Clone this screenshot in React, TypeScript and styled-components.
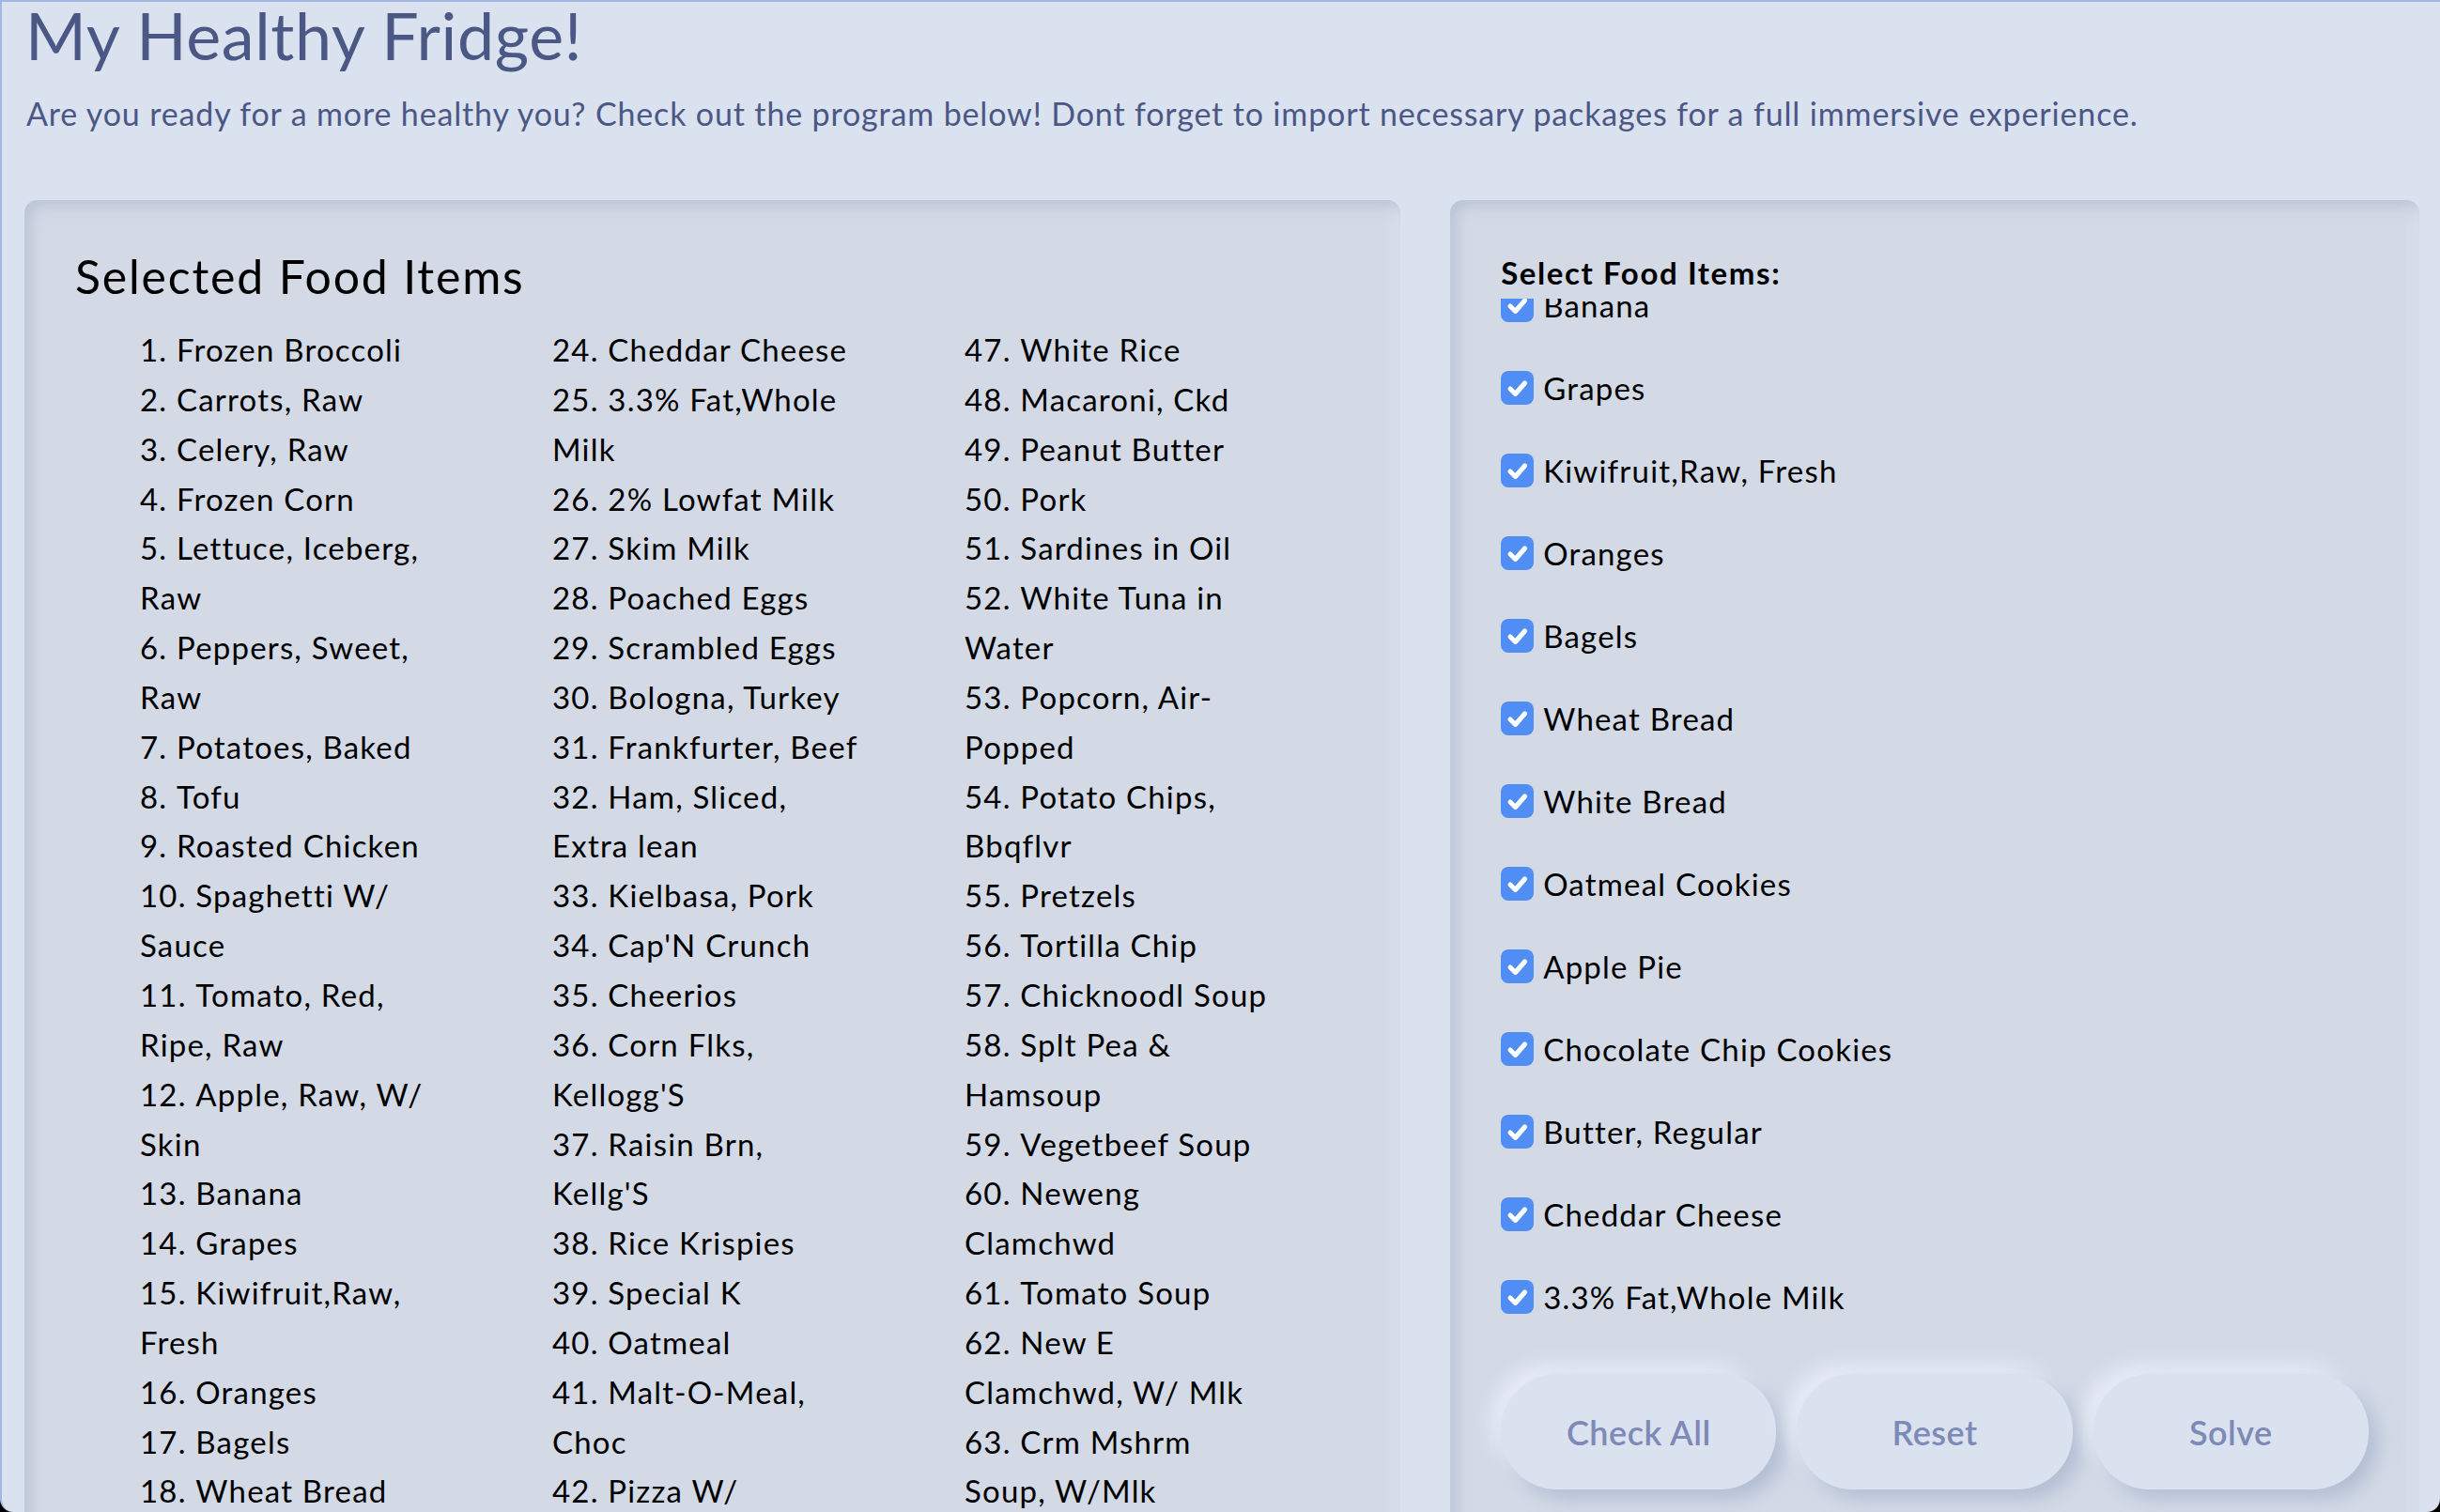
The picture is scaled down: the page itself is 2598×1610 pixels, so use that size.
import { useLayoutEffect, useRef } from 'react';
import styled, { createGlobalStyle } from 'styled-components';

const foods = [
  'Frozen Broccoli',
  'Carrots, Raw',
  'Celery, Raw',
  'Frozen Corn',
  'Lettuce, Iceberg, Raw',
  'Peppers, Sweet, Raw',
  'Potatoes, Baked',
  'Tofu',
  'Roasted Chicken',
  'Spaghetti W/ Sauce',
  'Tomato, Red, Ripe, Raw',
  'Apple, Raw, W/ Skin',
  'Banana',
  'Grapes',
  'Kiwifruit,Raw, Fresh',
  'Oranges',
  'Bagels',
  'Wheat Bread',
  'White Bread',
  'Oatmeal Cookies',
  'Apple Pie',
  'Chocolate Chip Cookies',
  'Butter, Regular',
  'Cheddar Cheese',
  '3.3% Fat,Whole Milk',
  '2% Lowfat Milk',
  'Skim Milk',
  'Poached Eggs',
  'Scrambled Eggs',
  'Bologna, Turkey',
  'Frankfurter, Beef',
  'Ham, Sliced, Extra lean',
  'Kielbasa, Pork',
  "Cap'N Crunch",
  'Cheerios',
  "Corn Flks, Kellogg'S",
  "Raisin Brn, Kellg'S",
  'Rice Krispies',
  'Special K',
  'Oatmeal',
  'Malt-O-Meal, Choc',
  'Pizza W/ Pepperoni',
  'Taco',
  'Hamburger W/ Toppings',
  'Hotdog, Plain',
  'Couscous',
  'White Rice',
  'Macaroni, Ckd',
  'Peanut Butter',
  'Pork',
  'Sardines in Oil',
  'White Tuna in Water',
  'Popcorn, Air-Popped',
  'Potato Chips, Bbqflvr',
  'Pretzels',
  'Tortilla Chip',
  'Chicknoodl Soup',
  'Splt Pea & Hamsoup',
  'Vegetbeef Soup',
  'Neweng Clamchwd',
  'Tomato Soup',
  'New E Clamchwd, W/ Mlk',
  'Crm Mshrm Soup, W/Mlk',
  'Beanbacn Soup, W/Watr',
];

// the selected list is shown in three columns: 1-23, 24-46, 47-64
const columnStarts = [0, 23, 46, foods.length];

const ROW_HEIGHT = 88;
const SCROLL_OFFSET = 1093;

const GlobalStyle = createGlobalStyle`
  html {
    background: #000;
  }
  body {
    margin: 0;
    font-family: Lato, 'Noto Sans', sans-serif;
  }
`;

const StyledPage = styled.div`
  box-sizing: border-box;
  height: 100vh;
  overflow: hidden;
  background: #dbe2ef;
  border-top: 2px solid #a3b7e5;
  border-left: 2px solid #a3b7e5;
  border-radius: 0 0 14px 14px;
  padding: 0 22px 0 24px;
`;

const StyledTitle = styled.h1`
  margin: 0;
  font-size: 70px;
  line-height: 70px;
  font-weight: 400;
  letter-spacing: 0.6px;
  color: #4b5785;
  padding-left: 1px;
`;

const StyledIntro = styled.p`
  margin: 23px 0 0;
  font-size: 34px;
  line-height: 51px;
  letter-spacing: 0.85px;
  color: #4b5785;
  padding-left: 2px;
`;

const StyledPanels = styled.div`
  display: grid;
  grid-template-columns: minmax(0, 1.42fr) minmax(0, 1fr);
  gap: 53px;
  margin-top: 67px;
`;

const StyledPanel = styled.section`
  box-sizing: border-box;
  min-height: 1500px;
  background: #d3dae6;
  border-radius: 14px;
  padding: 51px 54px;
  box-shadow: inset 7px 7px 14px rgba(168, 180, 200, 0.55),
    inset -7px -7px 14px rgba(236, 241, 249, 0.35);
`;

const StyledPanelTitle = styled.h2`
  margin: 0;
  font-size: 50px;
  line-height: 60px;
  font-weight: 400;
  letter-spacing: 1.8px;
  color: #000;
`;

const StyledColumns = styled.div`
  display: grid;
  grid-template-columns: repeat(3, 330px);
  column-gap: 109px;
  margin-top: 22px;
  padding-left: 69px;
`;

const StyledList = styled.ol`
  margin: 0;
  padding: 0;
  list-style-position: inside;
  font-size: 33px;
  line-height: 52.85px;
  letter-spacing: 1.2px;
  color: #000;
`;

const StyledPickerTitle = styled.h3`
  margin: 6px 0 8px;
  font-size: 33px;
  line-height: 40px;
  font-weight: 700;
  letter-spacing: 1.6px;
  color: #000;
`;

const StyledScroller = styled.div`
  height: 1106px;
  overflow-y: auto;
  scrollbar-width: none;

  &::-webkit-scrollbar {
    display: none;
  }
`;

const StyledOption = styled.label`
  display: flex;
  align-items: center;
  gap: 10px;
  height: ${ROW_HEIGHT}px;
  font-size: 33px;
  letter-spacing: 1.2px;
  color: #000;
  cursor: pointer;
`;

const StyledCheckbox = styled.span`
  flex: none;
  width: 35px;
  height: 36px;
  border-radius: 8px;
  background: #508ef5;
  display: flex;
  align-items: center;
  justify-content: center;
`;

const StyledButtons = styled.div`
  display: flex;
  gap: 22px;
  margin-top: 39px;
`;

const StyledButton = styled.button`
  width: 294px;
  height: 123px;
  border: none;
  border-radius: 60px;
  background: #dbe2ef;
  color: #7d89b6;
  font-family: Lato, 'Noto Sans', sans-serif;
  font-size: 36px;
  font-weight: 600;
  letter-spacing: 0.5px;
  cursor: pointer;
  box-shadow: 10px 10px 20px rgba(160, 175, 200, 0.65),
    -10px -10px 20px rgba(234, 239, 248, 0.9);
`;

function CheckMark() {
  return (
    <svg width="35" height="36" viewBox="0 0 35 36">
      <polyline
        points="10,19 15.5,24.5 25.5,13"
        fill="none"
        stroke="#fff"
        strokeWidth="5"
        strokeLinecap="round"
        strokeLinejoin="round"
      />
    </svg>
  );
}

function App() {
  const scrollerRef = useRef<HTMLDivElement>(null);

  useLayoutEffect(() => {
    if (scrollerRef.current) scrollerRef.current.scrollTop = SCROLL_OFFSET;
  }, []);

  return (
    <>
      <GlobalStyle />
      <StyledPage>
        <StyledTitle>My Healthy Fridge!</StyledTitle>
        <StyledIntro>
          Are you ready for a more healthy you? Check out the program below!
          Dont forget to import necessary packages for a full immersive
          experience.
        </StyledIntro>
        <StyledPanels>
          <StyledPanel>
            <StyledPanelTitle>Selected Food Items</StyledPanelTitle>
            <StyledColumns>
              {columnStarts.slice(0, -1).map((start, i) => (
                <StyledList key={start} start={start + 1}>
                  {foods.slice(start, columnStarts[i + 1]).map((food) => (
                    <li key={food}>{food}</li>
                  ))}
                </StyledList>
              ))}
            </StyledColumns>
          </StyledPanel>
          <StyledPanel>
            <StyledPickerTitle>Select Food Items:</StyledPickerTitle>
            <StyledScroller ref={scrollerRef}>
              {foods.map((food) => (
                <StyledOption key={food}>
                  <StyledCheckbox>
                    <CheckMark />
                  </StyledCheckbox>
                  {food}
                </StyledOption>
              ))}
            </StyledScroller>
            <StyledButtons>
              <StyledButton>Check All</StyledButton>
              <StyledButton>Reset</StyledButton>
              <StyledButton>Solve</StyledButton>
            </StyledButtons>
          </StyledPanel>
        </StyledPanels>
      </StyledPage>
    </>
  );
}

export default App;
